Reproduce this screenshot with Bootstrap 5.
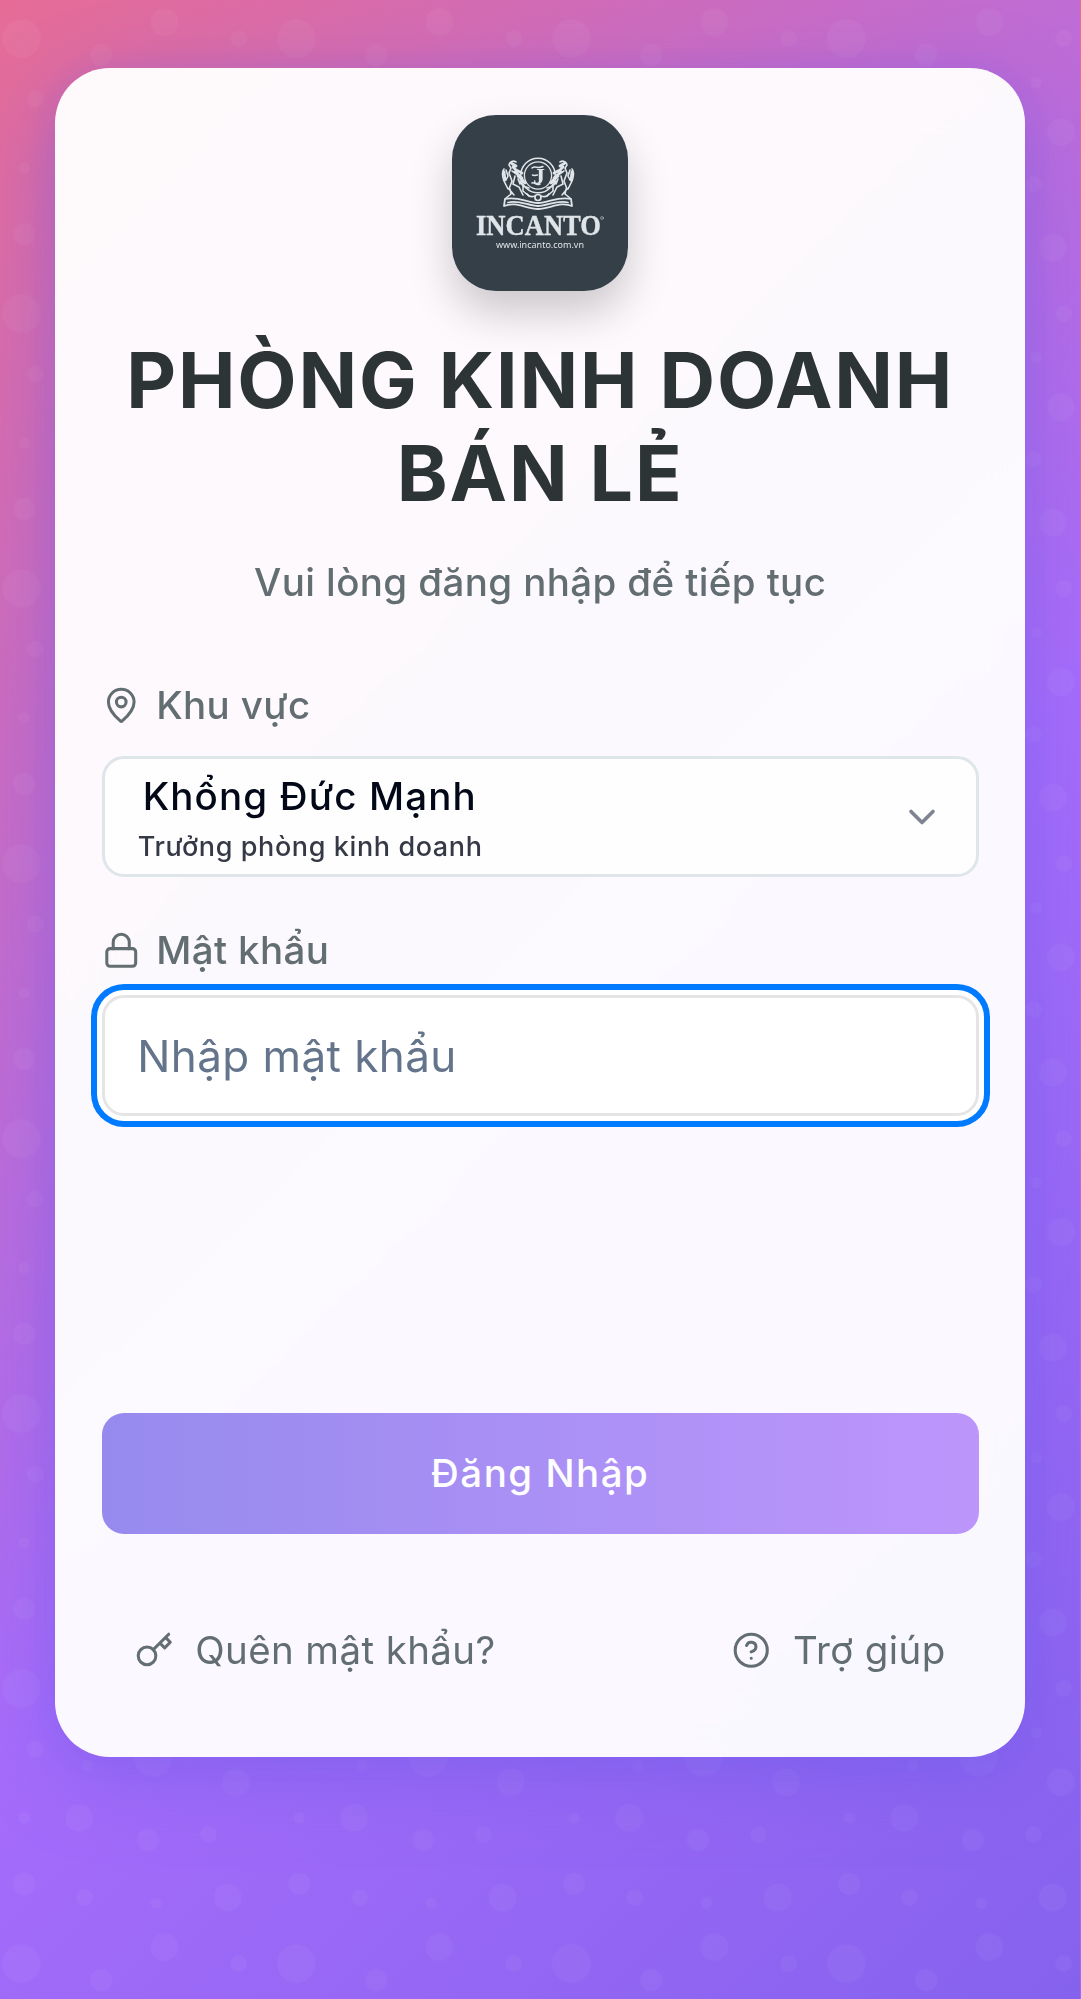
<!DOCTYPE html>
<html lang="vi">
<head>
<meta charset="utf-8">
<meta name="viewport" content="width=device-width, initial-scale=1">
<title>Đăng nhập</title>
<link href="https://cdn.jsdelivr.net/npm/bootstrap@5.3.0/dist/css/bootstrap.min.css" rel="stylesheet">
<style>
body{font-family:Inter,"Noto Sans",sans-serif;min-height:1999px;letter-spacing:.39px;color:#636e72;
background:linear-gradient(135deg,#e66c96 0%,#a66cfb 57%,#8562ee 100%) 0 0/1080px 1999px repeat-x;position:relative}
.bubbles{position:absolute;inset:0;width:100%;height:100%}
.login-card{position:relative;margin:68.4px 55px 0;width:970.4px;height:1688.4px;border-radius:55px;padding:47px 46.7px 0;
background:rgba(255,255,255,.958);box-shadow:0 22px 82px rgba(108,92,231,.45),0 4px 30px rgba(108,92,231,.15);backdrop-filter:blur(27px)}
.logo-box{width:176px;height:176px;border-radius:44px;background:#353f48;box-shadow:0 22px 44px rgba(0,0,0,.2)}
.login-title{font-size:77px;line-height:92.5px;font-weight:700;color:#2d3436;margin:43px 0 0;letter-spacing:1.85px}
.login-sub{font-size:38.5px;line-height:58px;font-weight:500;margin-top:34px}
.field-label{font-size:38.5px;height:52px;font-weight:500;gap:16px}
.field-label svg,.foot-link svg{width:38.5px;height:38.5px;flex:none}
.label-area{margin-top:68px}
.label-pass{margin-top:47px}
.select-box{height:121px;border:3px solid #dfe6e9;border-radius:22px;background:rgba(255,255,255,.9);padding:0 32px 0 33px;margin-top:25px}
.who-name{font-size:38.5px;line-height:52px;font-weight:500;color:#020817;padding-left:5px;letter-spacing:1.15px;margin-top:4px}
.who-role{font-size:27px;line-height:40px;font-weight:500;color:#020817;opacity:.8;margin-top:5px;letter-spacing:.6px}
.pw-box{height:121px;border:3px solid #e5e5e5;border-radius:22px;background:#fff;padding:0 33px 0 32.5px;margin-top:19px;font-size:44px;letter-spacing:.42px;box-shadow:0 0 0 5px #fff,0 0 0 11px #007aff;color:#020817;outline:0;width:100%}
.pw-box::placeholder{color:#64748b;opacity:1}
.submit-btn,.submit-btn:hover{height:121px;border-radius:22px;border:0;color:#fff;font-size:38.5px;font-weight:500;letter-spacing:1.5px;background:linear-gradient(90deg,#6c5ce7,#a36cfa);opacity:.7;margin-top:297px}
.foot-row{margin-top:86px;height:60px;padding:0 33px}
.foot-link{font-size:38.5px;gap:22px;color:#636e72;text-decoration:none}
</style>
</head>
<body>
<svg class="bubbles" aria-hidden="true"><defs><pattern id="dots" width="100" height="100" patternUnits="userSpaceOnUse" patternTransform="translate(-8.8 8.4) scale(2.75)"><g fill="#fff" fill-opacity=".04"><circle cx="11" cy="11" r="7"/><circle cx="59" cy="36" r="7"/><circle cx="16" cy="33" r="3"/><circle cx="79" cy="64" r="3"/><circle cx="34" cy="87" r="3"/><circle cx="90" cy="11" r="3"/><circle cx="12" cy="82" r="4"/><circle cx="40" cy="17" r="4"/><circle cx="63" cy="5" r="5"/><circle cx="57" cy="66" r="4"/><circle cx="86" cy="87" r="5"/><circle cx="32" cy="58" r="5"/><circle cx="89" cy="45" r="5"/><circle cx="80" cy="27" r="2"/><circle cx="60" cy="89" r="2"/><circle cx="35" cy="39" r="2"/><circle cx="12" cy="58" r="2"/></g></pattern></defs><rect width="1080" height="100%" fill="url(#dots)"/></svg>
<div class="d-flex">
<main class="login-card">
<div class="logo-box mx-auto">
<svg class="d-block" width="176" height="176" viewBox="0 0 176 176" fill="none" stroke="#dfe5e8" stroke-linecap="round">
<circle cx="86" cy="60.500" r="17.300" stroke-width="1.500"/><circle cx="86" cy="60.500" r="13.600" stroke-width="1.300"/>
<text x="87" y="69" font-family="Liberation Serif" font-size="24" font-weight="700" fill="#dfe5e8" stroke="none" text-anchor="middle" letter-spacing="0">J</text>
<path d="M80 53c3-2.500 6 1 11-1.500M80.500 60c2 1 3 0 5 0M80 68c3-1 4 3 8 1" stroke-width="1.500"/>
<g id="lion" stroke-width="1.600"><path d="M64 47c-3-2-7 0-7 3l2 3-2 5 3 8-3 8 5 6M60 56l8 5 4 5M63 61l-2 8 6 3 4 8M66 64l2 5M52 54c-3 4-1 9 0 12l4 8M54 55l2 6-2 4M68 66l3 5 6 2M71 70v6l6 5M58 74l1 5-5 4"/><path d="M59 48l5 3M61 52l4 4M63 57l7 6M66 61l7 7M64 55l6 3M52 57l1 8" stroke-width="2.800"/><path d="M53 84c12-3 21 3 33 4M52 91c12-5 22 3 34 3M53 84l-1 7M56 87.500c10-3 20 3 30 3.500M75 79c2 3 5 3 8 2" stroke-width="1.800"/></g>
<use href="#lion" transform="translate(172 0) scale(-1 1)"/><circle cx="86" cy="82.500" r="3" stroke-width="1.700"/>
<g fill="#dfe5e8"><text x="24" y="119.600" textLength="125" lengthAdjust="spacingAndGlyphs" font-family="Liberation Serif" font-size="28.500" font-weight="700" letter-spacing="0" stroke-width=".4">INCANTO</text>
<text x="44" y="133.300" textLength="88" lengthAdjust="spacingAndGlyphs" font-family="Noto Sans" font-size="9.500" letter-spacing="0" stroke="none">www.incanto.com.vn</text></g><circle cx="150" cy="103" r="1.400" stroke-width=".5"/>
</svg>
</div>
<h1 class="login-title text-center">PHÒNG KINH DOANH BÁN LẺ</h1>
<p class="login-sub text-center mb-0">Vui lòng đăng nhập để tiếp tục</p>
<form>
<div class="field-label label-area d-flex align-items-center"><svg viewBox="0 0 24 24" fill="none" stroke="currentColor" stroke-width="1.900" stroke-linecap="round" stroke-linejoin="round"><path d="M20 10c0 4.993-5.539 10.193-7.399 11.799a1 1 0 0 1-1.202 0C9.539 20.193 4 14.993 4 10a8 8 0 0 1 16 0"/><circle cx="12" cy="10" r="3"/></svg><span>Khu vực</span></div>
<div class="select-box d-flex align-items-center justify-content-between" role="combobox">
<div><div class="who-name">Khổng Đức Mạnh</div><div class="who-role">Trưởng phòng kinh doanh</div></div>
<svg width="44" height="44" viewBox="0 0 24 24" fill="none" stroke="#808490" stroke-width="2" stroke-linecap="round" stroke-linejoin="round"><path d="m6 9 6 6 6-6"/></svg>
</div>
<label for="pw" class="field-label label-pass d-flex align-items-center"><svg viewBox="0 0 24 24" fill="none" stroke="currentColor" stroke-width="1.900" stroke-linecap="round" stroke-linejoin="round"><rect width="18" height="11" x="3" y="11" rx="2"/><path d="M7 11V7a5 5 0 0 1 10 0v4"/></svg><span>Mật khẩu</span></label>
<input id="pw" type="text" class="pw-box d-block" placeholder="Nhập mật khẩu">
<button type="button" class="btn submit-btn w-100 d-block">Đăng Nhập</button>
</form>
<div class="foot-row d-flex justify-content-between align-items-center">
<a href="#" class="foot-link d-flex align-items-center"><svg viewBox="0 0 24 24" fill="none" stroke="currentColor" stroke-width="1.900" stroke-linecap="round" stroke-linejoin="round"><circle cx="7.500" cy="15.500" r="5.500"/><path d="m21 2-9.600 9.600M15.500 7.500l3 3L22 7l-3-3"/></svg><span>Quên mật khẩu?</span></a>
<a href="#" class="foot-link d-flex align-items-center"><svg viewBox="0 0 24 24" fill="none" stroke="currentColor" stroke-width="1.900" stroke-linecap="round" stroke-linejoin="round"><circle cx="12" cy="12" r="10"/><path d="M9.090 9a3 3 0 0 1 5.830 1c0 2-3 3-3 3M12 17h.01"/></svg><span>Trợ giúp</span></a>
</div>
</main>
</div>
<script src="https://cdn.jsdelivr.net/npm/bootstrap@5.3.0/dist/js/bootstrap.bundle.min.js"></script>
</body>
</html>
